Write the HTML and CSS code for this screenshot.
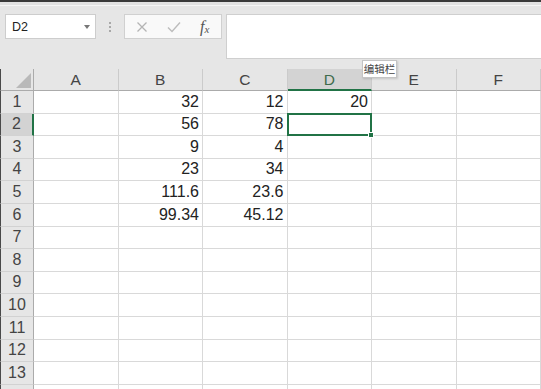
FILE: index.html
```html
<!DOCTYPE html>
<html lang="zh">
<head>
<meta charset="utf-8">
<title>Sheet</title>
<link rel="stylesheet" href="styles.css">
</head>
<body>
<div class="app">
  <div class="titlebar"></div>
  <div class="strip"></div>
  <div class="toolbar">
    <div class="namebox"><span class="ref">D2</span><span class="caret"></span></div>
    <div class="grip"><i></i><i></i><i></i></div>
    <div class="fnbox">
      <svg class="ico" width="12" height="12" viewBox="0 0 12 12"><path d="M1.5 1.5 L10.5 10.5 M10.5 1.5 L1.5 10.5" stroke="#b4b4b4" stroke-width="1.3" fill="none"/></svg>
      <svg class="ico" width="14" height="12" viewBox="0 0 14 12"><path d="M1 6.5 L5 10.5 L13 1.5" stroke="#bcbcbc" stroke-width="1.4" fill="none"/></svg>
      <span class="fx">f<sub>x</sub></span>
    </div>
    <div class="formula"></div>
  </div>
  <div class="sheet">
    <div class="hd corner"><span class="tri"></span></div>
    <div class="hd col">A</div>
    <div class="hd col">B</div>
    <div class="hd col">C</div>
    <div class="hd col sel">D</div>
    <div class="hd col">E</div>
    <div class="hd col">F</div>

    <div class="rh">1</div><div class="c"></div><div class="c">32</div><div class="c">12</div><div class="c">20</div><div class="c"></div><div class="c"></div>
    <div class="rh sel">2</div><div class="c"></div><div class="c">56</div><div class="c">78</div><div class="c active"><span class="handle"></span></div><div class="c"></div><div class="c"></div>
    <div class="rh">3</div><div class="c"></div><div class="c">9</div><div class="c">4</div><div class="c"></div><div class="c"></div><div class="c"></div>
    <div class="rh">4</div><div class="c"></div><div class="c">23</div><div class="c">34</div><div class="c"></div><div class="c"></div><div class="c"></div>
    <div class="rh">5</div><div class="c"></div><div class="c">111.6</div><div class="c">23.6</div><div class="c"></div><div class="c"></div><div class="c"></div>
    <div class="rh">6</div><div class="c"></div><div class="c">99.34</div><div class="c">45.12</div><div class="c"></div><div class="c"></div><div class="c"></div>
    <div class="rh">7</div><div class="c"></div><div class="c"></div><div class="c"></div><div class="c"></div><div class="c"></div><div class="c"></div>
    <div class="rh">8</div><div class="c"></div><div class="c"></div><div class="c"></div><div class="c"></div><div class="c"></div><div class="c"></div>
    <div class="rh">9</div><div class="c"></div><div class="c"></div><div class="c"></div><div class="c"></div><div class="c"></div><div class="c"></div>
    <div class="rh">10</div><div class="c"></div><div class="c"></div><div class="c"></div><div class="c"></div><div class="c"></div><div class="c"></div>
    <div class="rh">11</div><div class="c"></div><div class="c"></div><div class="c"></div><div class="c"></div><div class="c"></div><div class="c"></div>
    <div class="rh">12</div><div class="c"></div><div class="c"></div><div class="c"></div><div class="c"></div><div class="c"></div><div class="c"></div>
    <div class="rh">13</div><div class="c"></div><div class="c"></div><div class="c"></div><div class="c"></div><div class="c"></div><div class="c"></div>
    <div class="rh"></div><div class="c"></div><div class="c"></div><div class="c"></div><div class="c"></div><div class="c"></div><div class="c"></div>
  </div>
  <div class="tooltip">编辑栏</div>
</div>
</body>
</html>
```

FILE: styles.css
```css
* { box-sizing: border-box; }
html, body {
  margin: 0;
  padding: 0;
  width: 541px;
  height: 389px;
  overflow: hidden;
  background: #e6e6e6;
  font-family: "Liberation Sans", Arial, "Noto Sans CJK SC", sans-serif;
}
.app {
  position: relative;
  width: 541px;
  height: 389px;
  overflow: hidden;
}
.titlebar {
  height: 2px;
  background: #3a3a3a;
}
.strip {
  height: 4px;
  background: #e2e2e2;
  border-bottom: 1px solid #f6f6f6;
}
.toolbar {
  display: flex;
  align-items: flex-start;
  height: 54px;
  padding: 8px 0 0 5px;
}
.namebox {
  width: 91px;
  height: 25px;
  background: #ffffff;
  border: 1px solid #cdcdcd;
  display: flex;
  align-items: center;
  justify-content: space-between;
  padding: 0 5px 0 6px;
}
.ref {
  font-size: 12.5px;
  color: #222;
}
.caret {
  width: 0;
  height: 0;
  border-left: 3.5px solid transparent;
  border-right: 3.5px solid transparent;
  border-top: 4px solid #777;
}
.grip {
  width: 28px;
  height: 25px;
  display: flex;
  flex-direction: column;
  align-items: center;
  justify-content: center;
  gap: 2px;
}
.grip i {
  display: block;
  width: 2px;
  height: 2px;
  background: #a8a8a8;
}
.fnbox {
  width: 98px;
  height: 25px;
  background: #f9f9f9;
  border: 1px solid #d0d0d0;
  display: flex;
  align-items: center;
  padding: 0 0 0 11px;
}
.fnbox .ico:first-child { margin-right: 19px; }
.fnbox .ico:nth-child(2) { margin-right: 19px; }
.fx {
  font-family: "Liberation Serif", "Times New Roman", serif;
  font-style: italic;
  font-size: 16px;
  color: #555;
  line-height: 1;
}
.fx sub {
  font-size: 11px;
  vertical-align: -1px;
  margin-left: 0;
}
.formula {
  flex: 1;
  height: 45px;
  margin-left: 4px;
  background: #ffffff;
  border: 1px solid #cfcfcf;
  border-right: none;
}
.sheet {
  margin-top: 9px;
  display: grid;
  grid-template-columns: 34px repeat(6, 84.5px);
  grid-template-rows: 22px repeat(14, 22.6px);
  background: #ffffff;
}
.hd {
  background: #e6e6e6;
  border-right: 1px solid #cbcbcb;
  border-bottom: 1px solid #ababab;
  font-size: 15.5px;
  color: #444;
  display: flex;
  align-items: flex-end;
  justify-content: center;
  line-height: 18px;
  padding-bottom: 1px;
}
.hd.corner {
  border-left: 1px solid #4a4a4a;
  border-right: 1px solid #ababab;
  position: relative;
}
.tri {
  position: absolute;
  right: 2px;
  bottom: 2px;
  width: 0;
  height: 0;
  border-left: 15px solid transparent;
  border-bottom: 15px solid #b9b9b9;
}
.hd.sel {
  background: #d3d3d3;
  color: #3e6c4c;
  border-bottom: 2px solid #217346;
  padding-bottom: 0;
}
.rh {
  background: #e6e6e6;
  border-left: 1px solid #4a4a4a;
  border-right: 1px solid #ababab;
  border-bottom: 1px solid #d2d2d2;
  font-size: 16px;
  color: #444;
  display: flex;
  align-items: flex-end;
  justify-content: center;
  line-height: 18px;
  padding-bottom: 2px;
}
.rh.sel {
  background: #d3d3d3;
  border-right: 2px solid #217346;
}
.c {
  position: relative;
  background: #ffffff;
  border-right: 1px solid #d9d9d9;
  border-bottom: 1px solid #d9d9d9;
  font-size: 16px;
  color: #222;
  display: flex;
  align-items: flex-end;
  justify-content: flex-end;
  line-height: 18px;
  padding: 0 3px 2px 0;
}
.c.active::after {
  content: "";
  position: absolute;
  top: -1px;
  left: -1px;
  right: -1px;
  bottom: -1px;
  border: 2px solid #217346;
}
.handle {
  position: absolute;
  right: -3px;
  bottom: -3px;
  width: 6px;
  height: 6px;
  background: #217346;
  border: 1px solid #ffffff;
  z-index: 2;
}
.tooltip {
  position: absolute;
  left: 362px;
  top: 60px;
  width: 35px;
  height: 18px;
  background: #ffffff;
  border: 1px solid #c4c4c4;
  box-shadow: 1px 1px 2px rgba(0,0,0,0.15);
  font-family: "Noto Sans CJK SC", sans-serif;
  font-size: 10.5px;
  line-height: 16px;
  color: #444;
  text-align: center;
  z-index: 5;
}
```
